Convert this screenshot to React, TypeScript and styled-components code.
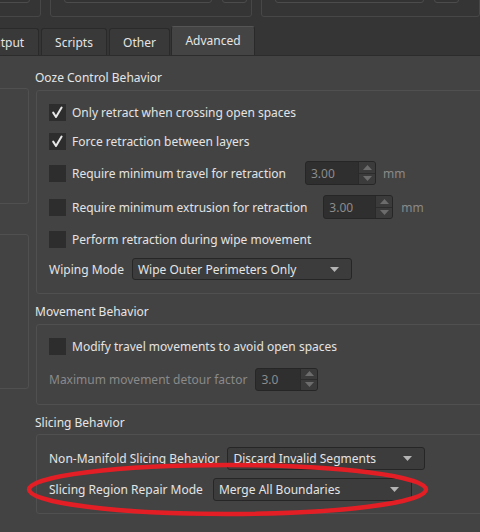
import React from "react";
import styled, { createGlobalStyle } from "styled-components";

const GlobalStyle = createGlobalStyle`
  html, body {
    margin: 0;
    padding: 0;
    background: #353535;
  }
  body {
    font-family: "Noto Sans", "DejaVu Sans", sans-serif;
    font-size: 12px;
    color: #e2e2e2;
  }
`;

const Page = styled.div`
  position: relative;
  width: 480px;
  height: 532px;
  overflow: hidden;
  background: #353535;
`;

/* strip of group boxes belonging to the page above the tabs */
const TopStrip = styled.div`
  display: flex;
  height: 26px;
  margin-left: -20px;
  gap: 9px;
  align-items: flex-end;
`;

const TopBox = styled.div<{ $w: number }>`
  box-sizing: border-box;
  width: ${(p) => p.$w}px;
  height: 40px;
  margin-bottom: 9px;
  border: 1px solid #474747;
  border-radius: 3px;
  display: flex;
  align-items: flex-start;
  gap: 10px;
  padding-left: 13px;
`;

const TopField = styled.div<{ $w: number }>`
  box-sizing: border-box;
  width: ${(p) => p.$w}px;
  height: 27px;
  margin-top: -2px;
  border: 1px solid #4c4c4c;
  border-radius: 3px;
  background: #333;
`;

const TabBar = styled.div`
  display: flex;
  align-items: flex-end;
  height: 29px;
  margin-left: -31px;
  gap: 2px;
`;

const Tab = styled.div<{ $active?: boolean; $w: number }>`
  box-sizing: border-box;
  width: ${(p) => p.$w}px;
  height: ${(p) => (p.$active ? 29 : 27)}px;
  display: flex;
  align-items: center;
  justify-content: center;
  padding-bottom: ${(p) => (p.$active ? 2 : 0)}px;
  margin-left: ${(p) => (p.$active ? -1 : 0)}px;
  background: ${(p) => (p.$active ? "#444444" : "#393939")};
  border: 1px solid #2a2a2a;
  border-bottom: none;
  border-top-color: ${(p) => (p.$active ? "#555" : "#2a2a2a")};
  border-radius: 3px 3px 0 0;
  color: #e4e4e4;
  font-size: 12px;
`;

const Pane = styled.div`
  display: flex;
  background: #434343;
  border-top: 1px solid #2c2c2c;
  height: 480px;
`;

const LeftColumn = styled.div`
  display: flex;
  flex-direction: column;
  padding-top: 32px;
  gap: 30px;
  margin-left: -40px;
  width: 69px;
  flex: none;
`;

const SideBox = styled.div<{ $h: number }>`
  box-sizing: border-box;
  height: ${(p) => p.$h}px;
  border: 1px solid #505050;
  border-radius: 3px;
`;

const RightColumn = styled.div`
  display: flex;
  flex-direction: column;
  margin-left: 7px;
  padding-top: 14px;
  width: 470px;
  flex: none;
`;

const SectionTitle = styled.div<{ $mt?: number }>`
  height: 16px;
  line-height: 16px;
  margin-top: ${(p) => p.$mt ?? 0}px;
  margin-left: -1px;
  color: #e6e6e6;
  font-size: 12px;
`;

const GroupBox = styled.div<{ $pt: number; $pb: number; $mt?: number }>`
  box-sizing: border-box;
  margin-top: ${(p) => p.$mt ?? 4}px;
  border: 1px solid #505050;
  border-radius: 3px;
  padding: ${(p) => p.$pt}px 0 ${(p) => p.$pb}px 12px;
  display: flex;
  flex-direction: column;
`;

const Row = styled.div<{ $mt?: number; $gap?: number }>`
  display: flex;
  align-items: center;
  height: 24px;
  margin-top: ${(p) => p.$mt ?? 0}px;
  gap: ${(p) => p.$gap ?? 8}px;
`;

const CheckLabel = styled.label`
  display: flex;
  align-items: center;
  gap: 6px;
  color: #e4e4e4;
  font-size: 12px;
  white-space: nowrap;
`;

const Box = styled.span`
  width: 17px;
  height: 17px;
  background: #2d2d2d;
  display: inline-flex;
  align-items: center;
  justify-content: center;
  flex: none;
`;

const Label = styled.span<{ $disabled?: boolean }>`
  color: ${(p) => (p.$disabled ? "#8a8a8a" : "#e4e4e4")};
  font-size: 12px;
  white-space: nowrap;
`;

const Spin = styled.div<{ $w: number; $h?: number; $ml?: number }>`
  box-sizing: border-box;
  width: ${(p) => p.$w}px;
  height: ${(p) => p.$h ?? 24}px;
  margin-left: ${(p) => p.$ml ?? 0}px;
  display: flex;
  background: #2f2f2f;
  border: 1px solid #262626;
  border-radius: 3px;
  overflow: hidden;
  flex: none;
`;

const SpinValue = styled.span`
  flex: 1;
  display: flex;
  align-items: center;
  padding-left: 5px;
  color: #8c8c8c;
  font-size: 12px;
`;

const SpinArrows = styled.span`
  width: 16px;
  display: flex;
  flex-direction: column;
  background: #3b3b3b;
  border-left: 1px solid #2a2a2a;
`;

const SpinHalf = styled.span<{ $down?: boolean }>`
  flex: 1;
  display: flex;
  align-items: center;
  justify-content: center;
  border-top: ${(p) => (p.$down ? "1px solid #2c2c2c" : "none")};
`;

const Unit = styled.span`
  color: #8a8a8a;
  font-size: 12px;
`;

const Combo = styled.div<{ $w: number; $h?: number }>`
  box-sizing: border-box;
  width: ${(p) => p.$w}px;
  height: ${(p) => p.$h ?? 23}px;
  display: flex;
  align-items: center;
  justify-content: space-between;
  padding: 0 12px 0 5px;
  background: #3c3c3c;
  border: 1px solid #262626;
  border-radius: 3px;
  color: #e4e4e4;
  font-size: 12px;
  white-space: nowrap;
  flex: none;
`;

const Annotation = styled.svg`
  position: absolute;
  left: 0;
  top: 0;
  pointer-events: none;
`;

const Tick = () => (
  <svg width="17" height="17" viewBox="0 0 17 17">
    <path d="M4.2 8.6 L7 13 L12.6 3.6" fill="none" stroke="#e8e8e8" strokeWidth="2" strokeLinecap="round" strokeLinejoin="round" />
  </svg>
);

const Check = ({ on, children }: { on?: boolean; children: React.ReactNode }) => (
  <CheckLabel>
    <Box>{on && <Tick />}</Box>
    {children}
  </CheckLabel>
);

const Tri = ({ up, color }: { up?: boolean; color: string }) => (
  <svg width="9" height="5" viewBox="0 0 9 5">
    <path d={up ? "M0 5 L4.5 0 L9 5 Z" : "M0 0 L9 0 L4.5 5 Z"} fill={color} />
  </svg>
);

const SpinBox = ({ value, w, h, ml }: { value: string; w: number; h?: number; ml?: number }) => (
  <Spin $w={w} $h={h} $ml={ml}>
    <SpinValue>{value}</SpinValue>
    <SpinArrows>
      <SpinHalf>
        <Tri up color="#6c6c6c" />
      </SpinHalf>
      <SpinHalf $down>
        <Tri color="#6c6c6c" />
      </SpinHalf>
    </SpinArrows>
  </Spin>
);

const ComboBox = ({ value, w, h }: { value: string; w: number; h?: number }) => (
  <Combo $w={w} $h={h}>
    <span>{value}</span>
    <Tri color="#b4b4b4" />
  </Combo>
);

export default function App() {
  return (
    <Page>
      <GlobalStyle />
      <TopStrip>
        <TopBox $w={64}>
          <TopField $w={36} />
        </TopBox>
        <TopBox $w={212}>
          <TopField $w={148} />
          <TopField $w={25} />
        </TopBox>
        <TopBox $w={230}>
          <TopField $w={149} />
          <TopField $w={25} />
        </TopBox>
      </TopStrip>

      <TabBar>
        <Tab $w={70}>Output</Tab>
        <Tab $w={66}>Scripts</Tab>
        <Tab $w={61}>Other</Tab>
        <Tab $w={84} $active>
          Advanced
        </Tab>
      </TabBar>

      <Pane>
        <LeftColumn>
          <SideBox $h={116} />
          <SideBox $h={155} />
        </LeftColumn>

        <RightColumn>
          <SectionTitle>Ooze Control Behavior</SectionTitle>
          <GroupBox $pt={9} $pb={12}>
            <Row>
              <Check on>Only retract when crossing open spaces</Check>
            </Row>
            <Row $mt={5}>
              <Check on>Force retraction between layers</Check>
            </Row>
            <Row $mt={8} $gap={7}>
              <Check>Require minimum travel for retraction</Check>
              <SpinBox value="3.00" w={71} ml={12} />
              <Unit>mm</Unit>
            </Row>
            <Row $mt={10} $gap={8}>
              <Check>Require minimum extrusion for retraction</Check>
              <SpinBox value="3.00" w={70} ml={8} />
              <Unit>mm</Unit>
            </Row>
            <Row $mt={8}>
              <Check>Perform retraction during wipe movement</Check>
            </Row>
            <Row $mt={6}>
              <Label>Wiping Mode</Label>
              <ComboBox value="Wipe Outer Perimeters Only" w={220} h={22} />
            </Row>
          </GroupBox>

          <SectionTitle $mt={10}>Movement Behavior</SectionTitle>
          <GroupBox $pt={9} $pb={13}>
            <Row>
              <Check>Modify travel movements to avoid open spaces</Check>
            </Row>
            <Row $mt={9} $gap={8}>
              <Label $disabled>Maximum movement detour factor</Label>
              <SpinBox value="3.0" w={63} h={23} />
            </Row>
          </GroupBox>

          <SectionTitle $mt={10}>Slicing Behavior</SectionTitle>
          <GroupBox $pt={11} $pb={12} $mt={3}>
            <Row>
              <Label>Non-Manifold Slicing Behavior</Label>
              <ComboBox value="Discard Invalid Segments" w={198} />
            </Row>
            <Row $mt={7} $gap={10}>
              <Label>Slicing Region Repair Mode</Label>
              <ComboBox value="Merge All Boundaries" w={199} />
            </Row>
          </GroupBox>
        </RightColumn>
      </Pane>

      <Annotation width="480" height="532" viewBox="0 0 480 532">
        <ellipse cx="227.5" cy="489.5" rx="198.5" ry="24.5" fill="none" stroke="#e31e25" strokeWidth="4.5" />
      </Annotation>
    </Page>
  );
}
